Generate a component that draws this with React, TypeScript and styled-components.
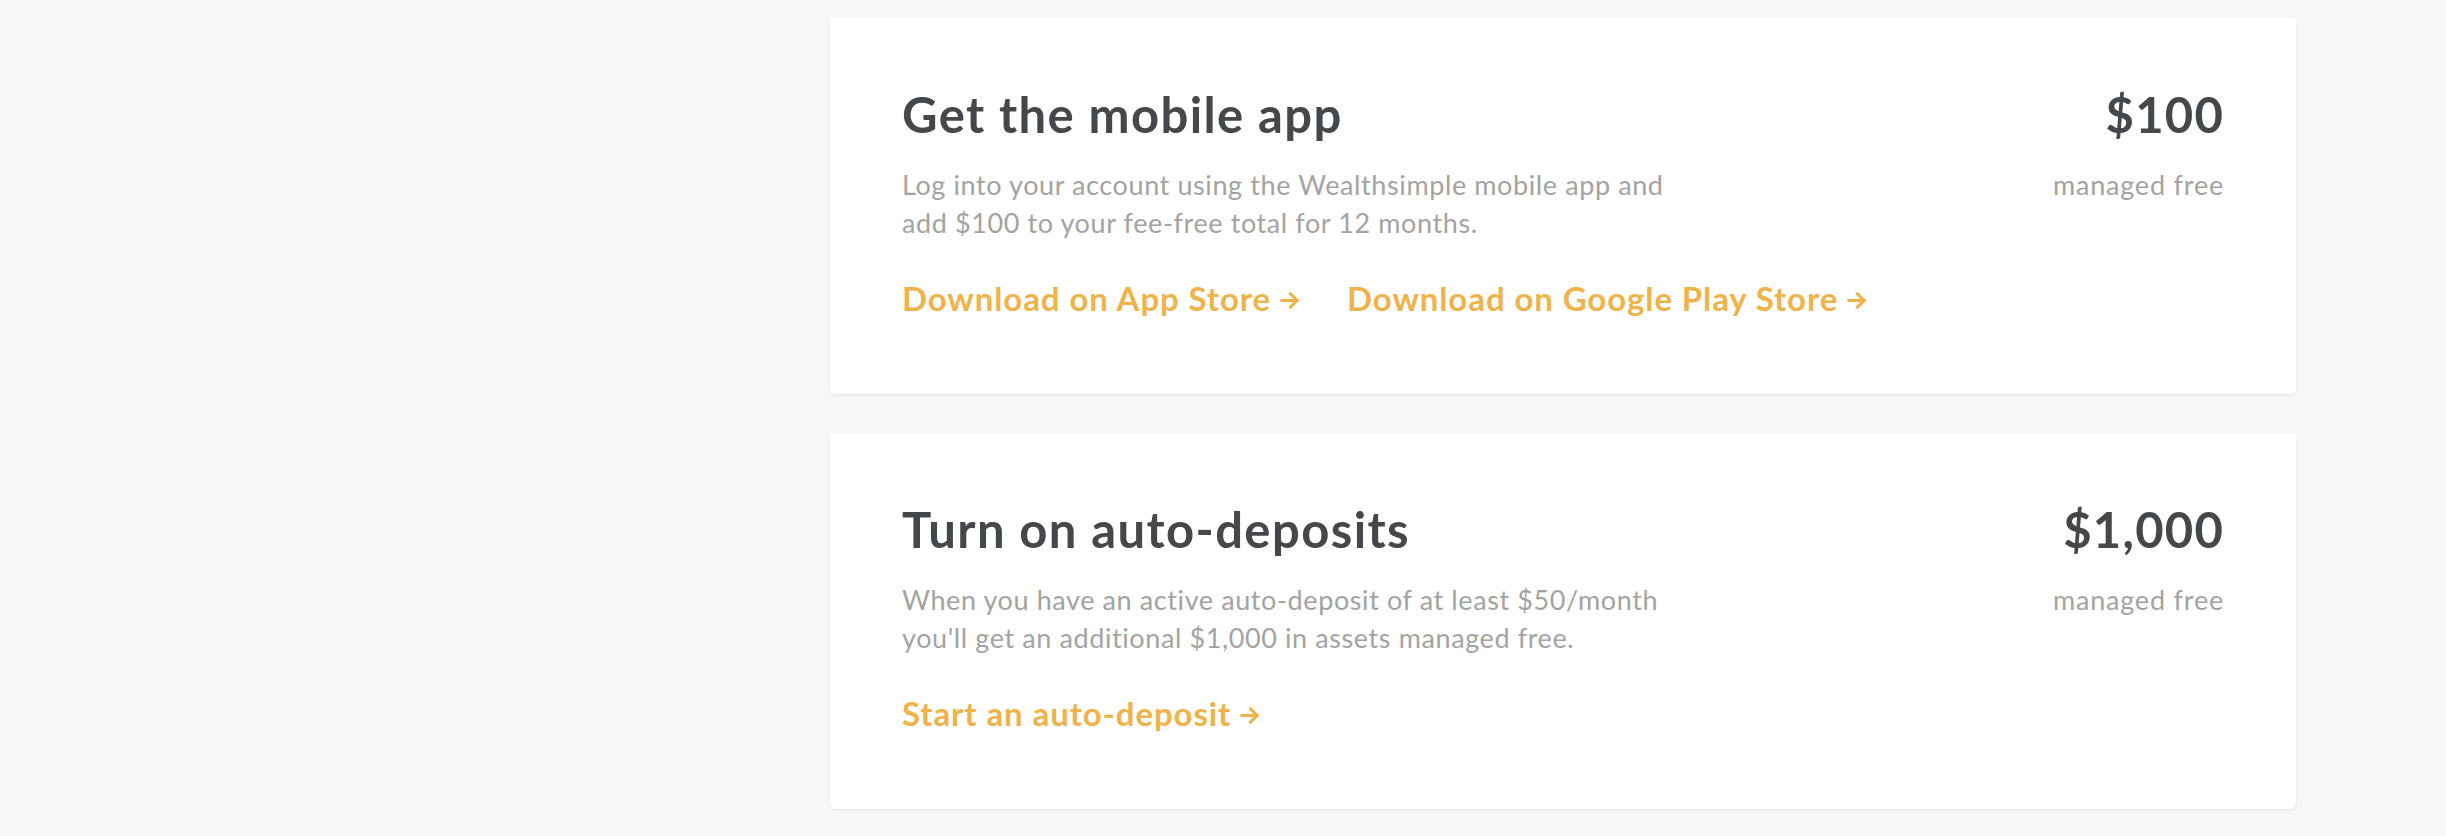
import * as React from 'react';
import styled, { createGlobalStyle } from 'styled-components';

const GlobalStyle = createGlobalStyle`
  html, body {
    margin: 0;
    padding: 0;
    background: #f8f7f5;
  }

  body {
    font-family: Lato, 'Open Sans', sans-serif;
    -webkit-font-smoothing: antialiased;
  }
`;

const TITLE_COLOR = '#45484b';
const MUTED_COLOR = '#a3a3a3';
const LINK_COLOR = '#eeb34b';

const Page = styled.div`
  display: grid;
  grid-template-columns: 830px 1466px 1fr;
  min-height: 836px;
`;

const Content = styled.main`
  grid-column: 2;
  display: flex;
  flex-direction: column;
  gap: 39px;
  padding-top: 18px;
`;

const Card = styled.section`
  display: flex;
  justify-content: space-between;
  height: 376px;
  box-sizing: border-box;
  padding: 68px 72px 0 72px;
  background: #fff;
  border-radius: 5px;
  box-shadow: 0 1px 2px rgba(0, 0, 0, 0.06), 0 2px 6px rgba(0, 0, 0, 0.02);
`;

const Body = styled.div`
  display: flex;
  flex-direction: column;
`;

const Title = styled.h2`
  margin: 0;
  font-size: 49px;
  line-height: 56px;
  font-weight: 700;
  letter-spacing: 1.4px;
  color: ${TITLE_COLOR};
`;

const Description = styled.p`
  margin: 24px 0 0;
  max-width: 785px;
  font-size: 27px;
  line-height: 38px;
  font-weight: 400;
  letter-spacing: 0.6px;
  color: ${MUTED_COLOR};
`;

const Links = styled.div`
  display: flex;
  gap: 46px;
  margin-top: 36px;
`;

const ActionLink = styled.a`
  display: inline-flex;
  align-items: center;
  gap: 9px;
  font-size: 33px;
  line-height: 40px;
  font-weight: 700;
  letter-spacing: 0.9px;
  color: ${LINK_COLOR};
  text-decoration: none;
  cursor: pointer;

  svg {
    margin-top: 4px;
  }
`;

const Reward = styled.div`
  display: flex;
  flex-direction: column;
  align-items: flex-end;
`;

const Amount = styled.div`
  font-size: 49px;
  line-height: 56px;
  font-weight: 700;
  letter-spacing: 1.2px;
  color: ${TITLE_COLOR};
`;

const RewardNote = styled.div`
  margin-top: 24px;
  font-size: 27px;
  line-height: 38px;
  letter-spacing: 0.8px;
  color: ${MUTED_COLOR};
`;

const Arrow = () => (
  <svg width="21" height="21" viewBox="0 0 16 16" fill="none">
    <path d="M1.5 8h11.5M8 3l5 5-5 5" stroke="currentColor" strokeWidth="2.4" strokeLinecap="square" />
  </svg>
);

interface IOffer {
  title: string;
  text: string;
  amount: string;
  links: string[];
}

const offers: IOffer[] = [
  {
    title: 'Get the mobile app',
    text: 'Log into your account using the Wealthsimple mobile app and add $100 to your fee-free total for 12 months.',
    amount: '$100',
    links: ['Download on App Store', 'Download on Google Play Store']
  },
  {
    title: 'Turn on auto-deposits',
    text: "When you have an active auto-deposit of at least $50/month you'll get an additional $1,000 in assets managed free.",
    amount: '$1,000',
    links: ['Start an auto-deposit']
  }
];

const OfferCard = ({ offer }: { offer: IOffer }) => (
  <Card>
    <Body>
      <Title>{offer.title}</Title>
      <Description>{offer.text}</Description>
      <Links>
        {offer.links.map(label => (
          <ActionLink key={label}>
            {label}
            <Arrow />
          </ActionLink>
        ))}
      </Links>
    </Body>
    <Reward>
      <Amount>{offer.amount}</Amount>
      <RewardNote>managed free</RewardNote>
    </Reward>
  </Card>
);

export default function App() {
  return (
    <>
      <GlobalStyle />
      <Page>
        <Content>
          {offers.map(offer => (
            <OfferCard key={offer.title} offer={offer} />
          ))}
        </Content>
      </Page>
    </>
  );
}
